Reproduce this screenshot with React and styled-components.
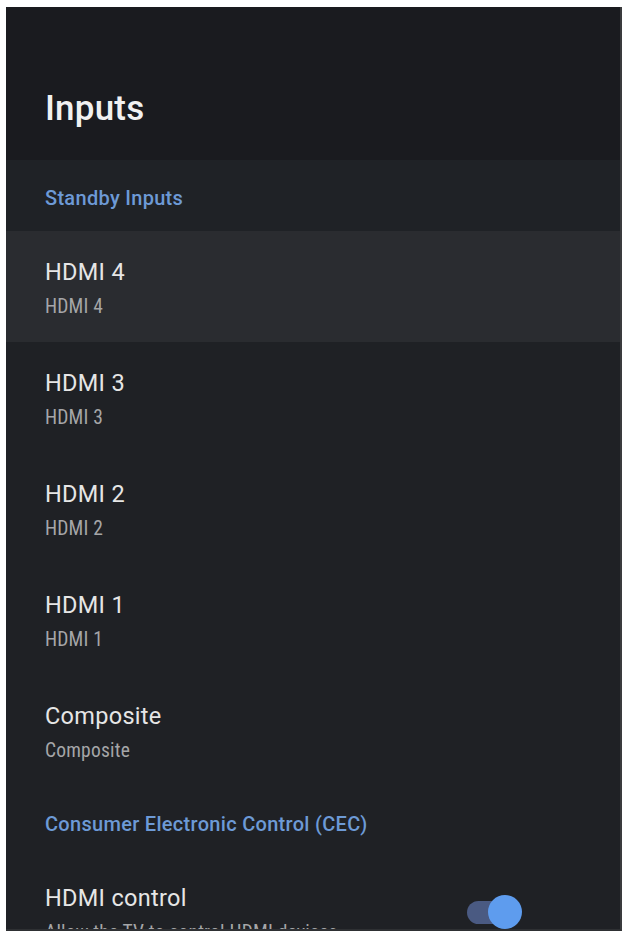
import React from "react";
import styled, { createGlobalStyle } from "styled-components";

const Global = createGlobalStyle`
  html, body {
    margin: 0;
    padding: 0;
    background: #ffffff;
  }
  body {
    font-family: Roboto, "Noto Sans", "Liberation Sans", sans-serif;
  }
`;

const Frame = styled.div`
  width: 626px;
  height: 937px;
  padding: 7px 4px 6px 6px;
  box-sizing: border-box;
  background: #ffffff;
`;

const Panel = styled.div`
  height: 100%;
  background: #1f2125;
  overflow: hidden;
  display: flex;
  flex-direction: column;
  border-right: 2px solid #3a3b3d;
  border-bottom: 2px solid #2e3033;
  box-sizing: border-box;
`;

const Header = styled.header`
  height: 153px;
  flex: none;
  background: #1a1b1f;
  display: flex;
  align-items: flex-end;
  padding: 0 0 31px 39px;
  box-sizing: border-box;
`;

const Title = styled.h1`
  margin: 0;
  font-size: 35px;
  line-height: 40px;
  font-weight: 500;
  color: #f1f1f1;
  letter-spacing: 0.2px;
`;

const Section = styled.div`
  height: 71px;
  flex: none;
  background: ${(p) => p.$bg || "transparent"};
  padding: 26px 0 0 39px;
  box-sizing: border-box;
  font-size: 20px;
  font-weight: 500;
  color: #6d9ad6;
  letter-spacing: 0.3px;
`;

const Row = styled.div`
  height: 111px;
  flex: none;
  display: flex;
  align-items: flex-start;
  justify-content: space-between;
  padding: 26px 98px 0 39px;
  box-sizing: border-box;
  background: ${(p) => (p.$focused ? "#2a2c30" : "transparent")};
`;

const Texts = styled.div`
  display: flex;
  flex-direction: column;
`;

const Primary = styled.div`
  font-size: 23.5px;
  line-height: 30px;
  color: #e6e6e6;
  letter-spacing: 0.3px;
`;

const Secondary = styled.div`
  margin-top: 9px;
  font-size: 19.5px;
  line-height: 22px;
  color: #a5a6a8;
  font-stretch: condensed;
  letter-spacing: 0.2px;
`;

const Toggle = styled.div`
  position: relative;
  width: 55px;
  height: 34px;
  margin-top: 12px;
  flex: none;
`;

const Track = styled.div`
  position: absolute;
  left: 0;
  top: 6px;
  width: 44px;
  height: 23px;
  border-radius: 11.5px;
  background: #4a5a82;
`;

const Thumb = styled.div`
  position: absolute;
  right: 0;
  top: 0;
  width: 34px;
  height: 34px;
  border-radius: 50%;
  background: #5e9cee;
`;

const inputs = ["HDMI 4", "HDMI 3", "HDMI 2", "HDMI 1", "Composite"];

export default function App() {
  return (
    <>
      <Global />
      <Frame>
        <Panel>
          <Header>
            <Title>Inputs</Title>
          </Header>
          <Section $bg="#1f2226">Standby Inputs</Section>
          {inputs.map((name, i) => (
            <Row key={name} $focused={i === 0}>
              <Texts>
                <Primary>{name}</Primary>
                <Secondary>{name}</Secondary>
              </Texts>
            </Row>
          ))}
          <Section>Consumer Electronic Control (CEC)</Section>
          <Row>
            <Texts>
              <Primary>HDMI control</Primary>
              <Secondary>Allow the TV to control HDMI devices</Secondary>
            </Texts>
            <Toggle>
              <Track />
              <Thumb />
            </Toggle>
          </Row>
        </Panel>
      </Frame>
    </>
  );
}
